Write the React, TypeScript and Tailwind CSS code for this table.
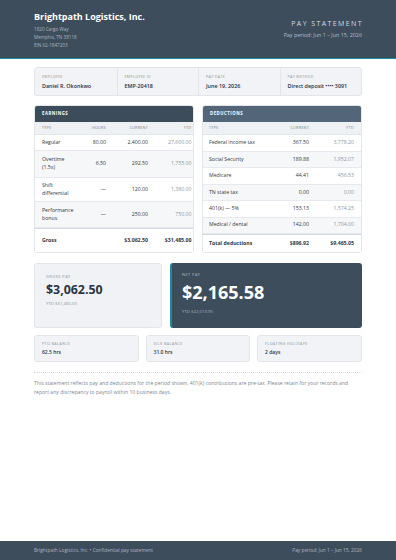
import React from 'react';

const earnings = [
  { type: 'Regular', hours: '80.00', current: '2,400.00', ytd: '27,600.00', h: 'h-[15.7px]', alt: false },
  { type: 'Overtime (1.5x)', hours: '6.50', current: '292.50', ytd: '1,755.00', h: 'h-[26.7px]', alt: true },
  { type: 'Shift differential', hours: '—', current: '120.00', ytd: '1,380.00', h: 'h-[24.3px]', alt: false },
  { type: 'Performance bonus', hours: '—', current: '250.00', ytd: '750.00', h: 'h-[26px]', alt: true },
];

const deductions = [
  { type: 'Federal income tax', current: '367.50', ytd: '3,778.20' },
  { type: 'Social Security', current: '189.88', ytd: '1,952.07' },
  { type: 'Medicare', current: '44.41', ytd: '456.53' },
  { type: 'TN state tax', current: '0.00', ytd: '0.00' },
  { type: '401(k) — 5%', current: '153.13', ytd: '1,574.25' },
  { type: 'Medical / dental', current: '142.00', ytd: '1,704.00' },
];

const info = [
  { label: 'Employee', value: 'Daniel R. Okonkwo' },
  { label: 'Employee ID', value: 'EMP-20418' },
  { label: 'Pay date', value: 'June 19, 2026' },
  { label: 'Pay method', value: 'Direct deposit •••• 3091' },
];

const balances = [
  { label: 'PTO balance', value: '62.5 hrs' },
  { label: 'Sick balance', value: '31.0 hrs' },
  { label: 'Floating holidays', value: '2 days' },
];

const App = () => {
  return (
    <div
      className="min-h-[560px] w-[396px] flex flex-col bg-white text-[#2f3943]"
      style={{ fontFamily: '"Open Sans", "Noto Sans", sans-serif' }}
    >
      {/* Header */}
      <header className="h-[59px] bg-[#3e4d5c] border-b-[1.5px] border-[#1b8a9c] px-[34px] flex items-center justify-between">
        <div className="pt-[1px]">
          <div className="text-[9px] leading-[12px] font-bold text-white">Brightpath Logistics, Inc.</div>
          <div className="mt-[2px] text-[4.6px] leading-[8px] text-[#aab5c0]">
            <div>1820 Cargo Way</div>
            <div>Memphis, TN 38118</div>
            <div>EIN 62-1847203</div>
          </div>
        </div>
        <div className="text-right">
          <div className="text-[7px] leading-[9px] tracking-[0.2em] mr-[-1px] text-[#d3dae1]">PAY STATEMENT</div>
          <div className="mt-[3px] text-[5.4px] leading-[8px] text-[#b3bec9]">Pay period: Jun 1 – Jun 15, 2026</div>
        </div>
      </header>

      <main className="flex-1 px-[34px] pt-[8px]">
        {/* Employee info */}
        <div className="grid grid-cols-4 rounded-[3px] border border-[#e2e6ea] bg-[#f1f3f6] h-[29px]">
          {info.map((item, i) => (
            <div key={item.label} className={`pl-[7px] pt-[5.5px] ${i > 0 ? 'border-l border-[#e2e6ea]' : ''}`}>
              <div className="text-[3.6px] leading-[5px] uppercase tracking-[0.1em] text-[#8a95a1]">{item.label}</div>
              <div className="mt-[3px] text-[5.4px] leading-[8px] font-semibold text-[#26303a]">{item.value}</div>
            </div>
          ))}
        </div>

        {/* Tables */}
        <div className="mt-[8.5px] grid grid-cols-2 gap-[8px]">
          {/* Earnings */}
          <div className="rounded-[3px] border border-[#e2e6ea] overflow-hidden flex flex-col">
            <div className="h-[16.4px] bg-[#3d4c5b] flex items-center pl-[7px] text-[4.3px] font-bold tracking-[0.12em] text-white">EARNINGS</div>
            <div className="h-[13.6px] bg-[#eef1f4] flex items-center text-[3.6px] uppercase tracking-[0.1em] text-[#6f7b88] border-b border-[#e2e6ea]">
              <div className="w-[47px] pl-[7px]">Type</div>
              <div className="w-[24px] text-right">Hours</div>
              <div className="w-[42px] text-right">Current</div>
              <div className="flex-1 text-right pr-[1.5px]">YTD</div>
            </div>
            {earnings.map((r) => (
              <div
                key={r.type}
                className={`${r.h} ${r.alt ? 'bg-[#f5f7f9]' : 'bg-white'} flex items-center text-[5.2px] leading-[7.6px] border-b border-[#e6eaee]`}
              >
                <div className="w-[47px] pl-[7px] pr-[4px]">{r.type}</div>
                <div className="w-[24px] text-right">{r.hours}</div>
                <div className="w-[42px] text-right">{r.current}</div>
                <div className="flex-1 text-right pr-[1.5px] text-[#8b97a4]">{r.ytd}</div>
              </div>
            ))}
            <div className="flex-1 min-h-[24px] flex items-center text-[5.2px] font-bold border-t border-[#d3d9df] bg-white">
              <div className="w-[47px] pl-[7px]">Gross</div>
              <div className="w-[24px]" />
              <div className="w-[42px] text-right">$3,062.50</div>
              <div className="flex-1 text-right pr-[1.5px]">$31,485.00</div>
            </div>
          </div>

          {/* Deductions */}
          <div className="rounded-[3px] border border-[#e2e6ea] overflow-hidden flex flex-col">
            <div className="h-[16.4px] bg-[#536579] flex items-center pl-[7px] text-[4.3px] font-bold tracking-[0.12em] text-white">DEDUCTIONS</div>
            <div className="h-[13.6px] bg-[#eef1f4] flex items-center text-[3.6px] uppercase tracking-[0.1em] text-[#6f7b88] border-b border-[#e2e6ea]">
              <div className="w-[68px] pl-[6px]">Type</div>
              <div className="w-[38px] text-right">Current</div>
              <div className="flex-1 text-right pr-[7px]">YTD</div>
            </div>
            {deductions.map((r, i) => (
              <div
                key={r.type}
                className={`h-[16.45px] ${i % 2 === 1 ? 'bg-[#f5f7f9]' : 'bg-white'} flex items-center text-[5.2px] border-b border-[#e6eaee]`}
              >
                <div className="w-[68px] pl-[6px]">{r.type}</div>
                <div className="w-[38px] text-right">{r.current}</div>
                <div className="flex-1 text-right pr-[7px] text-[#8b97a4]">{r.ytd}</div>
              </div>
            ))}
            <div className="flex-1 min-h-[18px] flex items-center text-[5.2px] font-bold border-t border-[#d3d9df] bg-white">
              <div className="w-[68px] pl-[6px]">Total deductions</div>
              <div className="w-[38px] text-right">$896.92</div>
              <div className="flex-1 text-right pr-[7px]">$9,465.05</div>
            </div>
          </div>
        </div>

        {/* Pay summary */}
        <div className="mt-[10px] grid grid-cols-[2fr_3fr] gap-[8px]">
          <div className="h-[65px] rounded-[3px] border border-[#e2e6ea] bg-[#f0f2f5] pl-[11px] pt-[10px]">
            <div className="text-[3.9px] leading-[5px] uppercase tracking-[0.12em] text-[#8a95a1]">Gross pay</div>
            <div className="mt-[3px] text-[12.4px] leading-[15px] font-bold text-[#2a3541]">$3,062.50</div>
            <div className="mt-[3px] text-[4.3px] leading-[6px] text-[#8a95a1]">YTD $31,485.00</div>
          </div>
          <div className="h-[65px] rounded-[3px] bg-[#3e4d5c] border-l-[2px] border-[#1b8a9c] pl-[10px] pt-[9px]">
            <div className="text-[3.9px] leading-[5px] uppercase tracking-[0.12em] text-[#b3bec9]">Net pay</div>
            <div className="mt-[4px] text-[18px] leading-[22px] font-bold text-white">$2,165.58</div>
            <div className="mt-[5px] text-[4.3px] leading-[6px] text-[#a8b3be]">YTD $22,019.95</div>
          </div>
        </div>

        {/* Balances */}
        <div className="mt-[7.3px] grid grid-cols-3 gap-[6.6px]">
          {balances.map((b) => (
            <div key={b.label} className="h-[27px] rounded-[3px] border border-[#e2e6ea] bg-[#f1f3f6] pl-[7px] pt-[5px]">
              <div className="text-[3.7px] leading-[5px] uppercase tracking-[0.1em] text-[#8a95a1]">{b.label}</div>
              <div className="mt-[2.5px] text-[5px] leading-[7px] font-semibold text-[#2a3541]">{b.value}</div>
            </div>
          ))}
        </div>

        {/* Note */}
        <div className="mt-[10px] border-t border-dotted border-[#d5dbe1] pt-[6px] text-[5.1px] leading-[9px] text-[#7c8895]">
          This statement reflects pay and deductions for the period shown. 401(k) contributions are pre-tax. Please retain for your records and report any discrepancy to payroll within 10 business days.
        </div>
      </main>

      {/* Footer */}
      <footer className="h-[18.7px] bg-[#3e4d5c] px-[34px] flex items-center justify-between text-[4.8px] text-[#aab5c0]">
        <span>Brightpath Logistics, Inc. • Confidential pay statement</span>
        <span>Pay period: Jun 1 – Jun 15, 2026</span>
      </footer>
    </div>
  );
};

export default App;
